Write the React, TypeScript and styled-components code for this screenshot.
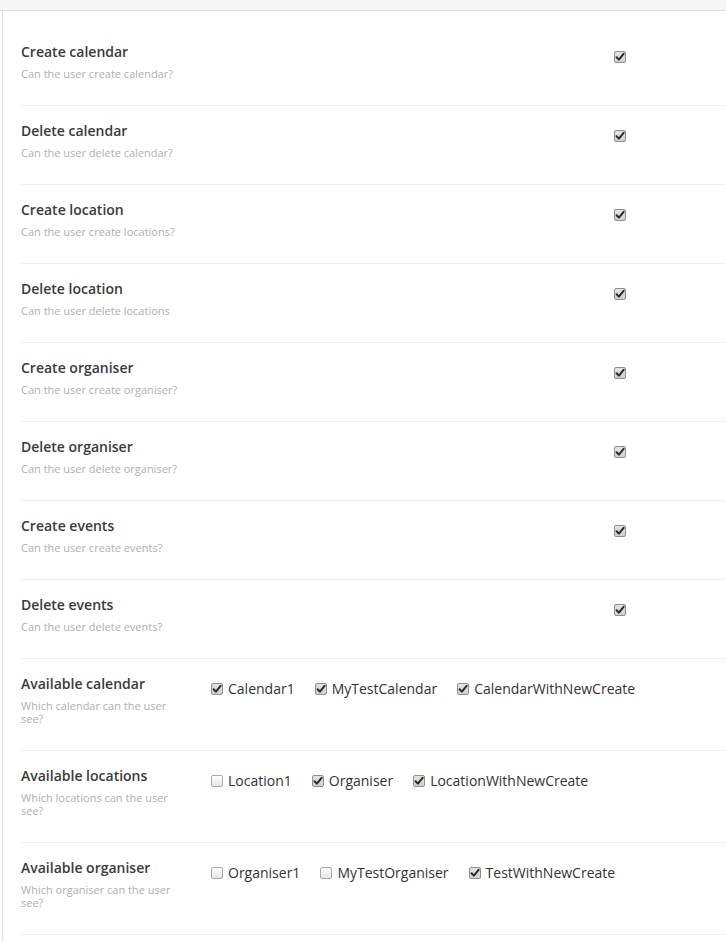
import React from 'react';
import styled, { createGlobalStyle } from 'styled-components';

type Permission = { title: string; description: string; checked: boolean };
type Option = { label: string; checked: boolean };
type Availability = { title: string; description: string; options: Option[] };

const permissions: Permission[] = [
  { title: 'Create calendar', description: 'Can the user create calendar?', checked: true },
  { title: 'Delete calendar', description: 'Can the user delete calendar?', checked: true },
  { title: 'Create location', description: 'Can the user create locations?', checked: true },
  { title: 'Delete location', description: 'Can the user delete locations', checked: true },
  { title: 'Create organiser', description: 'Can the user create organiser?', checked: true },
  { title: 'Delete organiser', description: 'Can the user delete organiser?', checked: true },
  { title: 'Create events', description: 'Can the user create events?', checked: true },
  { title: 'Delete events', description: 'Can the user delete events?', checked: true },
];

const availabilities: Availability[] = [
  {
    title: 'Available calendar',
    description: 'Which calendar can the user see?',
    options: [
      { label: 'Calendar1', checked: true },
      { label: 'MyTestCalendar', checked: true },
      { label: 'CalendarWithNewCreate', checked: true },
    ],
  },
  {
    title: 'Available locations',
    description: 'Which locations can the user see?',
    options: [
      { label: 'Location1', checked: false },
      { label: 'Organiser', checked: true },
      { label: 'LocationWithNewCreate', checked: true },
    ],
  },
  {
    title: 'Available organiser',
    description: 'Which organiser can the user see?',
    options: [
      { label: 'Organiser1', checked: false },
      { label: 'MyTestOrganiser', checked: false },
      { label: 'TestWithNewCreate', checked: true },
    ],
  },
];

const GlobalStyle = createGlobalStyle`
  html, body {
    margin: 0;
    padding: 0;
    background: #fff;
    overflow: hidden;
  }

  body {
    font-family: 'Open Sans', 'Noto Sans', sans-serif;
    color: #333;
  }
`;

const CheckBox = ({ checked }: { checked: boolean }) => (
  <S.Box $checked={checked}>
    {checked && (
      <svg width="10" height="10" viewBox="0 0 10 10">
        <path d="M1.6 5.2 L3.9 7.6 L8.6 1.8" fill="none" stroke="#2b2b2b" strokeWidth="2" strokeLinecap="round" strokeLinejoin="round" />
      </svg>
    )}
  </S.Box>
);

const App = () => {
  return (
    <>
      <GlobalStyle />
      <S.TopBar />
      <S.Panel>
        {permissions.map((permission) => (
          <S.Row key={permission.title}>
            <S.Label>
              <S.Title>{permission.title}</S.Title>
              <S.Description>{permission.description}</S.Description>
            </S.Label>
            <S.SingleControl>
              <CheckBox checked={permission.checked} />
            </S.SingleControl>
          </S.Row>
        ))}
        {availabilities.map((item) => (
          <S.Row key={item.title}>
            <S.Label>
              <S.Title>{item.title}</S.Title>
              <S.Description $narrow>{item.description}</S.Description>
            </S.Label>
            <S.Options>
              {item.options.map((option) => (
                <S.Option key={option.label}>
                  <CheckBox checked={option.checked} />
                  {option.label}
                </S.Option>
              ))}
            </S.Options>
          </S.Row>
        ))}
      </S.Panel>
    </>
  );
};

export default App;

const S = {
  TopBar: styled.div`
    height: 10px;
    background-color: #f7f7f7;
    border-bottom: 1px solid #dcdcdc;
  `,

  Panel: styled.div`
    margin-left: 2px;
    padding: 16px 0 0 18px;
    border-left: 1px solid #dedede;
    min-height: 931px;
    box-sizing: border-box;
  `,

  Row: styled.div`
    display: grid;
    grid-template-columns: 190px 1fr;
    align-items: start;

    padding: 15px 0 25px;
    border-bottom: 1px solid #efefef;
  `,

  Label: styled.div`
    display: flex;
    flex-direction: column;
  `,

  Title: styled.div`
    font-size: 14px;
    font-weight: 600;
    line-height: 20px;
    color: #3a3a3a;
    white-space: nowrap;
  `,

  Description: styled.div<{ $narrow?: boolean }>`
    margin-top: 5px;
    max-width: ${({ $narrow }) => ($narrow ? '160px' : 'none')};

    font-size: 11px;
    line-height: 13px;
    color: #b0b0b0;
    white-space: ${({ $narrow }) => ($narrow ? 'normal' : 'nowrap')};
  `,

  SingleControl: styled.div`
    display: flex;
    margin-top: 9px;
    padding-left: 403px;
  `,

  Options: styled.div`
    display: flex;
    align-items: center;
    gap: 20px;

    margin-top: 4px;
    height: 22px;
  `,

  Option: styled.label`
    display: flex;
    align-items: center;
    gap: 5px;

    font-size: 14px;
    line-height: 20px;
    color: #333;
    white-space: nowrap;
  `,

  Box: styled.span<{ $checked: boolean }>`
    display: inline-flex;
    align-items: center;
    justify-content: center;
    flex: none;

    width: 12px;
    height: 12px;
    box-sizing: border-box;
    border-radius: 2px;
    border: 1px solid ${({ $checked }) => ($checked ? '#8f8f8f' : '#a9a9a9')};

    background: ${({ $checked }) =>
      $checked ? 'linear-gradient(#e4e4e4, #cfcfcf)' : 'linear-gradient(#ffffff, #e6e6e6)'};
  `,
};
